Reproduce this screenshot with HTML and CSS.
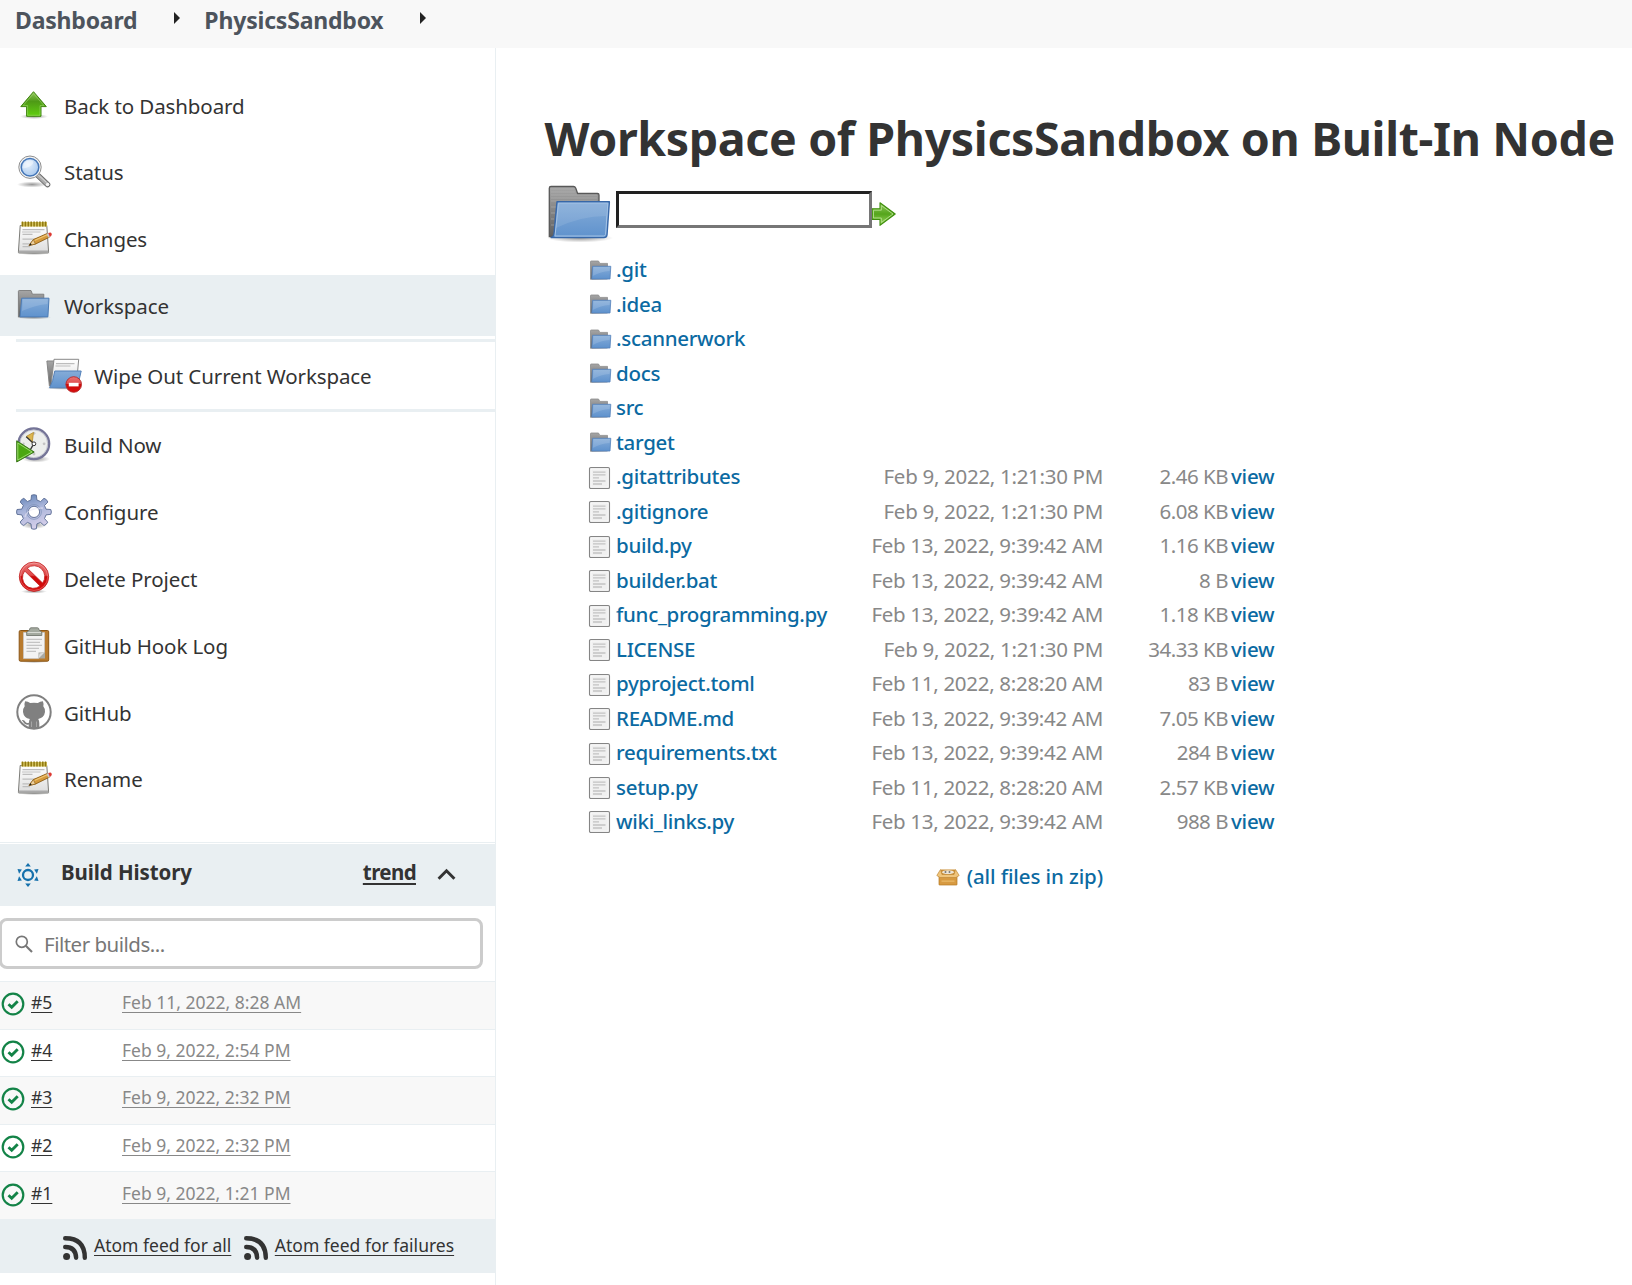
FILE: index.html
```html
<!DOCTYPE html>
<html lang="en">
<head>
<meta charset="utf-8">
<title>Workspace of PhysicsSandbox on Built-In Node</title>
<link rel="stylesheet" href="styles.css">
</head>
<body>
<svg class="defs" width="0" height="0" aria-hidden="true">
  <defs>
    <linearGradient id="green" x1="0" y1="0" x2="0" y2="1"><stop offset="0" stop-color="#8fc65a"/><stop offset=".4" stop-color="#4e9a16"/><stop offset="1" stop-color="#62d010"/></linearGradient>
    <linearGradient id="go" x1="0" y1="0" x2="0" y2="1"><stop offset="0" stop-color="#8fc95c"/><stop offset=".5" stop-color="#55a51c"/><stop offset="1" stop-color="#9ad85e"/></linearGradient>
    <linearGradient id="blue" x1="0" y1="0" x2="0" y2="1"><stop offset="0" stop-color="#85acd8"/><stop offset="1" stop-color="#5f92cd"/></linearGradient>
    <linearGradient id="grey" x1="0" y1="0" x2="0" y2="1"><stop offset="0" stop-color="#a6a6a6"/><stop offset="1" stop-color="#606060"/></linearGradient>
    <linearGradient id="paper" x1="0" y1="0" x2="0" y2="1"><stop offset="0" stop-color="#ffffff"/><stop offset="1" stop-color="#dcdcdc"/></linearGradient>
    <linearGradient id="red" x1="0" y1="0" x2="0" y2="1"><stop offset="0" stop-color="#ea7474"/><stop offset=".45" stop-color="#df4a4a"/><stop offset=".5" stop-color="#cc0a0a"/><stop offset="1" stop-color="#d80c0c"/></linearGradient>
    <linearGradient id="cog" x1="0" y1="0" x2=".3" y2="1"><stop offset="0" stop-color="#5c7fb4"/><stop offset=".5" stop-color="#a9b5da"/><stop offset="1" stop-color="#d3cde9"/></linearGradient>
    <radialGradient id="lens" cx=".4" cy=".35" r=".7"><stop offset="0" stop-color="#e4effb"/><stop offset="1" stop-color="#a9c9ee"/></radialGradient>
    <radialGradient id="shade"><stop offset="0" stop-color="#000" stop-opacity=".4"/><stop offset="1" stop-color="#000" stop-opacity="0"/></radialGradient>

    <symbol id="i-up" viewBox="0 0 36 36">
      <ellipse cx="18" cy="29.5" rx="14" ry="2.6" fill="url(#shade)"/>
      <path d="M17.5 4.7 30.3 19.6H25V29.3H10.6V19.6H4.8Z" fill="url(#green)" stroke="#3f8410" stroke-width="1" stroke-linejoin="round"/>
      <path d="M17.5 6.6 28 18.6H24V28.3H11.6V18.6H7Z" fill="none" stroke="#b5e08a" stroke-opacity=".55" stroke-width=".8"/>
    </symbol>
    <symbol id="i-search" viewBox="0 0 36 36">
      <ellipse cx="16" cy="30.5" rx="15" ry="3" fill="url(#shade)"/>
      <path d="M22 21.5 31.5 30.5" stroke="#666" stroke-width="5.6" stroke-linecap="round"/>
      <path d="M22 21.5 31.5 30.5" stroke="#a9a9a9" stroke-width="3.8" stroke-linecap="round"/>
      <path d="M21.8 20.5 30.5 28.6" stroke="#dedede" stroke-width="1"/>
      <circle cx="31.6" cy="30.4" r="1.7" fill="#f4f4f4"/>
      <circle cx="14" cy="13.2" r="11.2" fill="#f4f4f4" stroke="#8f8f8f" stroke-width="1"/>
      <circle cx="14" cy="13.2" r="8.8" fill="url(#lens)" stroke="#4577b8" stroke-width="1.5"/>
      <path d="M7.2 14.5A7 7 0 0 1 15 6.2C20 7 17 13 7.2 14.5Z" fill="#fff" opacity=".45"/>
    </symbol>
    <symbol id="i-note" viewBox="0 0 36 36">
      <ellipse cx="18" cy="32.2" rx="17" ry="1.8" fill="url(#shade)"/>
      <path d="M4.2 4.5H30.8L32.6 31.2Q32.6 31.9 31.9 31.9H3Q2.3 31.9 2.4 31.2Z" fill="url(#paper)" stroke="#7b7b77" stroke-width="1"/>
      <path d="M2.8 29.5H32.2L32.5 31.5H2.5Z" fill="#aaa"/>
      <path d="M6.5 8.7H28.5M6.5 13.4H16.5M6.5 18.2H24M6.5 22.9H14M6.5 25.6H14" stroke="#bdbdbd" stroke-width="1.2"/>
      <path d="M6 11H24.5" stroke="#ccc" stroke-width="1.2"/>
      <path d="M5.5 1H31V5.6H5.5Z" fill="#d6c562"/>
      <path d="M6.5 .6V5.4M9.4 .6V5.4M12.3 .6V5.4M15.2 .6V5.4M18.1 .6V5.4M21 .6V5.4M23.9 .6V5.4M26.8 .6V5.4M29.5 .6V5.4" stroke="#8f7810" stroke-width="1.5"/>
      <path d="M13 24.4 17.4 18.6 31.4 12.4 33.4 16.2 19.4 23.1Z" fill="#d59a3c" stroke="#8a5a12" stroke-width=".9" stroke-linejoin="round"/>
      <path d="M18.4 19.5 31.8 13.5" stroke="#f1c674" stroke-width="1.1"/>
      <path d="M13 24.4 17.4 18.6 19.4 23.1Z" fill="#edcf9d" stroke="#8a5a12" stroke-width=".6"/>
      <path d="M13 24.4 14.8 21.9 15.6 23.9Z" fill="#222"/>
      <path d="M30.5 12.8 32.6 11.9 34.4 15.7 32.4 16.7Z" fill="#c9c9c9"/>
      <path d="M32.2 12.1Q34.8 10.6 35.6 12.6 36.3 14.7 33.9 15.9Z" fill="#dd3a33"/>
    </symbol>
    <symbol id="i-folder" viewBox="0 0 36 36">
      <ellipse cx="18" cy="30.700" rx="17.5" ry="1.6" fill="url(#shade)"/>
      <path d="M2.4 30V4.4Q2.4 3.5 3.2 3.5H15L16.4 7.2H27.8V29.500Z" fill="url(#grey)" stroke="#7b7b7b" stroke-width=".9"/>
      <path d="M5.7 11.2H33L31.9 29.900H4Z" fill="url(#blue)" stroke="#4d7cb5" stroke-width="1" stroke-linejoin="round"/>
      <path d="M6.8 12.3H31.8L31.5 17Q20 18 6 24Z" fill="#fff" opacity=".14"/>
    </symbol>
    <symbol id="i-wipe" viewBox="0 0 36 36">
      <ellipse cx="17" cy="30" rx="17" ry="1.8" fill="url(#shade)"/>
      <path d="M.9 3H8L9 28H3.4Z" fill="url(#grey)" stroke="#858585"/>
      <path d="M8 1.3H32.7L31 20 5 27Z" fill="url(#paper)" stroke="#888" stroke-width="1"/>
      <path d="M10 5.7H28.5M9.5 8H24.5" stroke="#bcbcbc" stroke-width="1.2"/>
      <path d="M8.8 13H35.2Q33 23 31 29.8H3.6Q7 24 8.8 13Z" fill="url(#blue)" stroke="#5380b8"/>
      <circle cx="27.7" cy="26.5" r="7.8" fill="url(#red)" stroke="#b52828" stroke-width=".9"/>
      <rect x="22.8" y="24.8" width="9.8" height="3.6" fill="#fff"/>
    </symbol>
    <symbol id="i-build" viewBox="0 0 36 36">
      <ellipse cx="20" cy="32" rx="14" ry="3.5" fill="url(#shade)"/>
      <circle cx="17.8" cy="16.8" r="15.3" fill="#eceeec" stroke="#747497" stroke-width="2.4"/>
      <circle cx="17.8" cy="16.8" r="13.9" fill="none" stroke="#b8b9c8" stroke-width=".8"/>
      <g fill="#c4c4c4"><circle cx="18" cy="6.3" r="1.4"/><circle cx="28.1" cy="16.8" r="1.4"/><circle cx="18" cy="27" r="1.4"/><circle cx="7.5" cy="16.8" r="1.2"/></g>
      <path d="M10.5 9.3 17.5 5.4 16.2 15.8Z" fill="#dcb650" stroke="#ad8523" stroke-width=".7"/>
      <path d="M10.2 9.8 17.8 16.6 14.2 23" fill="none" stroke="#353535" stroke-width="1.4"/>
      <circle cx="17.9" cy="16.8" r="1.9" fill="#fff" stroke="#353535" stroke-width="1"/>
      <path d="M.7 13.8 18.2 25 .7 35Z" fill="#4ba712" stroke="#3a741c" stroke-width="1"/>
      <path d="M1.8 16 16 25 1.8 33Z" fill="none" stroke="#a5df79" stroke-width=".9"/>
    </symbol>
    <symbol id="i-gear" viewBox="0 0 36 36">
      <ellipse cx="18" cy="31" rx="13" ry="4" fill="url(#shade)"/>
      <path fill-rule="evenodd" d="M15.5 1.2Q18 .2 20.4 1.2L20.9 6 24.6 7.6 28 4.3Q30.600 5 31.900 8L28.500 11.500 30 15.200 34.800 15.500Q36 18 34.800 20.300L30 20.900 28.500 24.500 31.700 28.200Q30.600 30.600 28 31.500L24.500 28.400 20.900 29.900 20.400 34.700Q18 35.800 15.500 34.700L15 29.900 11.400 28.400 7.800 31.500Q5 30.800 4.200 28L7.300 24.500 5.800 20.900 1 20.300Q.1 18 1 15.500L5.800 15.100 7.300 11.500 4.200 8Q5 5.200 7.800 4.300L11.400 7.500 15 6ZM18 12.300A5.600 5.600 0 1 0 18 23.500 5.600 5.600 0 1 0 18 12.300Z" fill="url(#cog)" stroke="#596b93" stroke-width=".9"/>
      <circle cx="18" cy="17.900" r="7.400" fill="none" stroke="#8296bd" stroke-width=".8"/>
      <path d="M9 23Q11 14 27 14" fill="none" stroke="#e9e8f5" stroke-width="1.300" opacity=".6"/>
    </symbol>
    <symbol id="i-delete" viewBox="0 0 36 36">
      <ellipse cx="18" cy="31.500" rx="13" ry="2" fill="url(#shade)"/>
      <path fill-rule="evenodd" d="M18 2A14.700 14.700 0 1 0 18 31.400 14.700 14.700 0 1 0 18 2ZM11.200 8.100 26.600 23A10.800 10.800 0 0 0 11.200 8.100ZM8.700 11A10.800 10.800 0 0 0 24 26Z" fill="url(#red)" stroke="#c32222" stroke-width=".8"/>
      <circle cx="18" cy="16.700" r="13.700" fill="none" stroke="#fff" stroke-width=".7" opacity=".4"/>
    </symbol>
    <symbol id="i-clip" viewBox="0 0 36 36">
      <ellipse cx="18" cy="34.700" rx="15" ry="1.300" fill="url(#shade)"/>
      <rect x="3.200" y="3.500" width="29.500" height="30.700" rx="1.300" fill="#b97b2e" stroke="#8a5515"/>
      <path d="M7.500 5.500H28.500V25.500L22.500 31.500H7.500Z" fill="#f3f3f3" stroke="#c8c8c8" stroke-width=".7"/>
      <path d="M22.500 31.500V25.500H29V31.500Z" fill="#a9a9a3"/><path d="M22.500 31.500 23.500 26.500 28.500 25.500Z" fill="#ddd"/>
      <path d="M10.500 12.300H26M10.500 15.300H24M10.500 18.300H26M10.500 21.300H23M10.500 24.300H20" stroke="#c4c4c4" stroke-width="1.300"/>
      <path d="M13.500 3Q13.500 .8 15 .8H21.500Q23 .8 23 3L25.800 5V8.500H10.700V5Z" fill="#a4aaa0" stroke="#747970" stroke-width=".9"/>
      <path d="M11.500 5.500H25" stroke="#d7dad4" stroke-width="1"/>
    </symbol>
    <symbol id="i-github" viewBox="0 0 36 36">
      <circle cx="18" cy="18" r="16.700" fill="#fff" stroke="#808080" stroke-width="2"/>
      <path d="M9.100 7.200Q12 7.200 14.200 9.100 18 8.200 21.800 9.100 24 7.200 26.900 7.200 27.900 9.700 27.300 12.200 29.300 14.500 29 18 28.200 23.600 22.200 25.100 23.300 26.400 23.300 29V33.700Q18 35.300 12.700 33.700V30.500Q8.700 31.300 7.600 28.600 6.900 27 5.700 26.200 8.200 25.600 9.500 28 10.600 29.500 12.900 28.700 13 26.200 13.900 25.100 7.700 23.800 7 18 6.700 14.500 8.700 12.200 8.100 9.700 9.100 7.200Z" fill="#808080"/>
      <path d="M15.500 27.500V33M20.500 27.500V33" stroke="#aaa" stroke-width=".9"/>
    </symbol>
    <symbol id="i-bigfolder" viewBox="0 0 72 72">
      <ellipse cx="36" cy="60" rx="33" ry="4.500" fill="url(#shade)"/>
      <path d="M5.300 58.500V10.300Q5.300 8.500 7 8.500H29.500Q31 8.500 31.800 10.300L33.600 15.500H53.500Q55 15.500 55 17V58.500Z" fill="url(#grey)" stroke="#585858" stroke-width="1.300"/>
      <path d="M7 11H30M7 14H31M7 17H53M7 20H53M7 23H53M7 29H12M7 35H11M7 41H10M7 47H10" stroke="#b5b5b5" stroke-width=".8" opacity=".7"/>
      <path d="M13 23.700H65.400L63 57Q62.600 59.600 60 59.600H7Q9.500 59 10 56Z" fill="url(#blue)" stroke="#3767a8" stroke-width="1.400" stroke-linejoin="round"/>
      <path d="M14.500 25.200H63.800L61.600 56.500Q61.300 58 59.500 58H11Z" fill="none" stroke="#a5c3e5" stroke-width="1"/>
      <path d="M15 26H63L62 38Q37 38 12 50Z" fill="#fff" opacity=".1"/>
    </symbol>
    <symbol id="i-go" viewBox="0 0 24 24">
      <path d="M0 6.700H8V.8L23.200 12 8 23.300V17.400H0Z" fill="url(#go)" stroke="#3f8f0d" stroke-width="1.100" stroke-linejoin="round"/>
      <path d="M1.500 8.200H9.300V3.500L21 12 9.300 20.500V16H1.500Z" fill="none" stroke="#b5e08d" stroke-width=".9"/>
    </symbol>
    <symbol id="i-file" viewBox="0 0 24 24">
      <rect x="1.600" y="1.600" width="19.800" height="20.800" rx="1.200" fill="#f0f0f0" stroke="#858585" stroke-width="1.300"/>
      <rect x="2.800" y="2.800" width="17.400" height="18.400" fill="none" stroke="#fff" stroke-width=".9"/>
      <path d="M5 6.200H17.500M5 8.900H17.500M5 11.900H11M5 15H17.500M5 18H14" stroke="#c2c2c2" stroke-width="1.300"/>
    </symbol>
    <symbol id="i-sfolder" viewBox="0 0 24 24">
      <path d="M2.500 20.300V2.600Q2.500 2 3.100 2H10.500L11.800 4.400H19.500V20Z" fill="url(#grey)" stroke="#8b8b8b" stroke-width=".8"/>
      <path d="M4.600 7.300H22.800L22 20H3.800Z" fill="url(#blue)" stroke="#5482bb" stroke-width=".8"/>
      <path d="M5.500 8H22L21.500 12Q13 12.500 4.800 17Z" fill="#fff" opacity=".14"/>
    </symbol>
    <symbol id="i-zip" viewBox="0 0 24 24">
      <path d="M5 4.500H19L21 10H3Z" fill="#c98d34"/>
      <ellipse cx="12" cy="7.200" rx="6" ry="2" fill="#eee6d5"/>
      <circle cx="9.500" cy="7" r="1" fill="#777"/><circle cx="13.500" cy="7" r="1" fill="#777"/>
      <path d="M3 11H21V19.500Q21 20 20.500 20H3.500Q3 20 3 19.500Z" fill="#d79a41" stroke="#b67a24" stroke-width=".7"/>
      <path d="M4.500 4.500 .8 10.500 4 12.500H20L23.200 10.500 19.500 4.500 18 9.500H6Z" fill="#f0c57c" stroke="#c08a39" stroke-width=".7"/>
      <rect x="5.500" y="15.500" width="13" height="1.300" fill="#e9b968"/>
    </symbol>
    <symbol id="i-ok" viewBox="0 0 24 24">
      <circle cx="12" cy="12" r="10.300" fill="none" stroke="#138347" stroke-width="2.200"/>
      <path d="M7.500 12.300 10.700 15.300 16.700 9.300" fill="none" stroke="#138347" stroke-width="2.900"/>
    </symbol>
    <symbol id="i-feed" viewBox="0 0 24 24">
      <g fill="none" stroke="#333" stroke-width="4.400" stroke-linecap="round"><path d="M2.200 2.300Q21.800 2.300 21.800 21.800"/><path d="M2.200 11Q12.800 11 13.100 21.800"/></g>
      <circle cx="3.600" cy="20.500" r="3.500" fill="#333"/>
    </symbol>
  </defs>
</svg>

<header class="breadcrumbs">
  <a>Dashboard</a><span class="caret"></span><a>PhysicsSandbox</a><span class="caret"></span>
</header>

<div class="page">
  <aside class="side">
    <nav class="tasks">
      <a class="task"><svg><use href="#i-up"/></svg><span>Back to Dashboard</span></a>
      <a class="task"><svg><use href="#i-search"/></svg><span>Status</span></a>
      <a class="task"><svg><use href="#i-note"/></svg><span>Changes</span></a>
      <a class="task active"><svg><use href="#i-folder"/></svg><span>Workspace</span></a>
      <div class="subtasks">
        <a class="task"><svg><use href="#i-wipe"/></svg><span>Wipe Out Current Workspace</span></a>
      </div>
      <a class="task"><svg><use href="#i-build"/></svg><span>Build Now</span></a>
      <a class="task"><svg><use href="#i-gear"/></svg><span>Configure</span></a>
      <a class="task"><svg><use href="#i-delete"/></svg><span>Delete Project</span></a>
      <a class="task"><svg><use href="#i-clip"/></svg><span>GitHub Hook Log</span></a>
      <a class="task"><svg><use href="#i-github"/></svg><span>GitHub</span></a>
      <a class="task"><svg><use href="#i-note"/></svg><span>Rename</span></a>
    </nav>

    <section class="history">
      <div class="history-head">
        <svg class="sun" viewBox="0 0 24 24"><circle cx="12" cy="12" r="5" fill="none" stroke="#1570ac" stroke-width="2.300"/><g fill="#1570ac"><path d="M12 0 14.800 3.500H9.200Z"/><path d="M12 24 14.800 20.500H9.200Z"/><path d="M1.500 6 5.900 6.600 3.100 10.800Z"/><path d="M22.500 6 18.100 6.600 20.900 10.800Z"/><path d="M1.500 18 5.900 17.400 3.100 13.200Z"/><path d="M22.500 18 18.100 17.400 20.900 13.200Z"/></g></svg>
        <span class="history-title">Build History</span>
        <a class="trend">trend</a>
        <svg class="chev" viewBox="0 0 18 12"><path d="M1.500 10 9 2.500 16.500 10" fill="none" stroke="#333" stroke-width="2.800"/></svg>
      </div>
      <div class="filter">
        <svg viewBox="0 0 18 18"><circle cx="6.800" cy="6.800" r="5.500" fill="none" stroke="#777" stroke-width="1.700"/><path d="M10.800 10.800 17 17" stroke="#777" stroke-width="2.100"/></svg>
        <span>Filter builds...</span>
      </div>
      <div class="builds">
        <div class="build"><svg><use href="#i-ok"/></svg><a class="num">#5</a><a class="when">Feb 11, 2022, 8:28 AM</a></div>
        <div class="build"><svg><use href="#i-ok"/></svg><a class="num">#4</a><a class="when">Feb 9, 2022, 2:54 PM</a></div>
        <div class="build"><svg><use href="#i-ok"/></svg><a class="num">#3</a><a class="when">Feb 9, 2022, 2:32 PM</a></div>
        <div class="build"><svg><use href="#i-ok"/></svg><a class="num">#2</a><a class="when">Feb 9, 2022, 2:32 PM</a></div>
        <div class="build"><svg><use href="#i-ok"/></svg><a class="num">#1</a><a class="when">Feb 9, 2022, 1:21 PM</a></div>
      </div>
      <div class="feeds">
        <svg><use href="#i-feed"/></svg><a class="all">Atom feed for all</a>
        <svg><use href="#i-feed"/></svg><a>Atom feed for failures</a>
      </div>
    </section>
  </aside>

  <main class="main">
    <h1>Workspace of PhysicsSandbox on Built-In Node</h1>
    <div class="pathbar">
      <svg class="big"><use href="#i-bigfolder"/></svg><input class="path" type="text" aria-label="Path"><svg class="go"><use href="#i-go"/></svg>
    </div>
    <div class="files">
      <div class="row"><svg><use href="#i-sfolder"/></svg><a class="name">.git</a></div>
      <div class="row"><svg><use href="#i-sfolder"/></svg><a class="name">.idea</a></div>
      <div class="row"><svg><use href="#i-sfolder"/></svg><a class="name">.scannerwork</a></div>
      <div class="row"><svg><use href="#i-sfolder"/></svg><a class="name">docs</a></div>
      <div class="row"><svg><use href="#i-sfolder"/></svg><a class="name">src</a></div>
      <div class="row"><svg><use href="#i-sfolder"/></svg><a class="name">target</a></div>
      <div class="row"><svg><use href="#i-file"/></svg><a class="name">.gitattributes</a><span class="date">Feb 9, 2022, 1:21:30 PM</span><span class="size">2.46 KB</span><a class="view">view</a></div>
      <div class="row"><svg><use href="#i-file"/></svg><a class="name">.gitignore</a><span class="date">Feb 9, 2022, 1:21:30 PM</span><span class="size">6.08 KB</span><a class="view">view</a></div>
      <div class="row"><svg><use href="#i-file"/></svg><a class="name">build.py</a><span class="date">Feb 13, 2022, 9:39:42 AM</span><span class="size">1.16 KB</span><a class="view">view</a></div>
      <div class="row"><svg><use href="#i-file"/></svg><a class="name">builder.bat</a><span class="date">Feb 13, 2022, 9:39:42 AM</span><span class="size">8 B</span><a class="view">view</a></div>
      <div class="row"><svg><use href="#i-file"/></svg><a class="name">func_programming.py</a><span class="date">Feb 13, 2022, 9:39:42 AM</span><span class="size">1.18 KB</span><a class="view">view</a></div>
      <div class="row"><svg><use href="#i-file"/></svg><a class="name">LICENSE</a><span class="date">Feb 9, 2022, 1:21:30 PM</span><span class="size">34.33 KB</span><a class="view">view</a></div>
      <div class="row"><svg><use href="#i-file"/></svg><a class="name">pyproject.toml</a><span class="date">Feb 11, 2022, 8:28:20 AM</span><span class="size">83 B</span><a class="view">view</a></div>
      <div class="row"><svg><use href="#i-file"/></svg><a class="name">README.md</a><span class="date">Feb 13, 2022, 9:39:42 AM</span><span class="size">7.05 KB</span><a class="view">view</a></div>
      <div class="row"><svg><use href="#i-file"/></svg><a class="name">requirements.txt</a><span class="date">Feb 13, 2022, 9:39:42 AM</span><span class="size">284 B</span><a class="view">view</a></div>
      <div class="row"><svg><use href="#i-file"/></svg><a class="name">setup.py</a><span class="date">Feb 11, 2022, 8:28:20 AM</span><span class="size">2.57 KB</span><a class="view">view</a></div>
      <div class="row"><svg><use href="#i-file"/></svg><a class="name">wiki_links.py</a><span class="date">Feb 13, 2022, 9:39:42 AM</span><span class="size">988 B</span><a class="view">view</a></div>
    </div>
    <div class="zip"><svg><use href="#i-zip"/></svg><a>(all files in zip)</a></div>
  </main>
</div>
</body>
</html>
```
FILE: styles.css
```css
* { box-sizing: border-box; }
html, body { height: 100%; }
body {
  margin: 0;
  display: flex;
  flex-direction: column;
  overflow: hidden;
  background: #fff;
  color: #333;
  font-family: "Noto Sans", "Open Sans", sans-serif;
  font-size: 20.5px;
  line-height: 30px;
  white-space: nowrap;
}
svg { display: block; flex: none; }
.defs { position: absolute; }

.breadcrumbs {
  flex: none;
  display: flex;
  align-items: center;
  height: 48px;
  padding: 0 15px 9px;
  background: #f8f8f8;
  color: #4d545d;
  font-size: 23px;
  font-weight: 700;
  letter-spacing: -0.2px;
}
.caret {
  margin: -4px 24px 0 37px;
  border: 6px solid transparent;
  border-left-color: #222;
  border-right: 0;
}

.page { flex: 1; display: flex; min-height: 0; }
.side { flex: none; width: 496px; border-right: 1px solid #e9eff2; }

.tasks { padding-top: 27px; height: 794px; }
.task {
  display: flex;
  align-items: center;
  gap: 12px;
  height: 61px;
  margin-bottom: 5.8px;
  padding-left: 16px;
  letter-spacing: -0.1px;
}
.task svg { width: 36px; height: 36px; margin-top: -1px; }
.task.active { background: #e9eff2; margin-bottom: 3px; }
.subtasks {
  margin: 0 0 2.5px 16px;
  padding: 3.5px 0 3px 14px;
  height: 73px;
  border-top: 3px solid #e9eff2;
  border-bottom: 3px solid #e9eff2;
}

.history { border-top: 1px solid #e9eff2; padding-top: 1px; }
.history-head {
  display: flex;
  align-items: center;
  height: 62px;
  padding: 0 39px 6px 16px;
  background: #e9eff2;
  font-weight: 700;
}
.sun { width: 24px; height: 24px; margin: 6px 21px 0 0; }
.history-title { flex: 1; letter-spacing: -0.1px; }
.trend { margin-right: 21px; letter-spacing: -0.6px; text-decoration: underline; text-underline-offset: 3px; }
.chev { width: 19px; height: 13px; margin-top: 5px; }
.filter {
  display: flex;
  align-items: center;
  gap: 11px;
  width: 484px;
  height: 51px;
  margin: 12px 0 12px -1px;
  padding: 0 13px;
  border: 3px solid #ccc;
  border-radius: 8px;
  color: #777;
  letter-spacing: -0.5px;
}
.filter svg { width: 18px; height: 18px; }

.builds { font-size: 17.5px; }
.build {
  display: flex;
  align-items: center;
  height: 47.6px;
  padding: 0 0 6px 1px;
  border-top: 1.5px solid #e9eff2;
}
.build:nth-child(odd) { background: #f8f8f8; }
.build svg { width: 24px; height: 24px; margin: 4px 6px 0 0; }
.build a { text-decoration: underline; text-underline-offset: 3px; text-decoration-thickness: 1px; }
.num { width: 91px; }
.when { color: #888; }
.feeds {
  display: flex;
  height: 54px;
  padding: 12px 0 0 63px;
  background: #e9eff2;
  font-size: 17.5px;
}
.feeds svg { width: 24px; height: 24px; margin: 5px 7px 0 0; }
.feeds a { line-height: 28px; text-decoration: underline; text-underline-offset: 3px; text-decoration-thickness: 1px; }
.feeds .all { margin-right: 12.5px; }

.main { flex: 1; padding: 55px 0 0 48.500px; }
h1 { margin: 0; font-size: 46.5px; line-height: 70px; font-weight: 700; letter-spacing: -0.35px; }
.pathbar { display: flex; align-items: flex-start; height: 79px; padding-top: 5px; margin-left: -0.5px; }
.big { width: 72px; height: 72px; }
.path { width: 256px; height: 37px; margin-top: 13px; border: 3px inset #767676; background: #fff; }
.go { width: 24px; height: 24px; margin-top: 24px; }

.files { padding: 0 0 0 43.5px; }
.row { display: flex; align-items: center; height: 34.49px; }
.row svg { width: 24px; height: 24px; margin: 3px 4px 0 0; }
.name { width: 220px; font-weight: 500; letter-spacing: -0.3px; }
.name, .view, .zip a { color: #0b6aa2; }
.date { width: 267px; text-align: right; color: #888; letter-spacing: -0.3px; }
.size { width: 125px; text-align: right; color: #888; letter-spacing: -0.5px; }
.view { margin-left: 3px; font-weight: 500; letter-spacing: -0.2px; }
.zip { display: flex; justify-content: flex-end; align-items: center; gap: 7px; width: 558.5px; margin-top: 22.5px; font-weight: 500; letter-spacing: -0.1px; }
.zip svg { width: 24px; height: 24px; margin-top: 2px; }
```
